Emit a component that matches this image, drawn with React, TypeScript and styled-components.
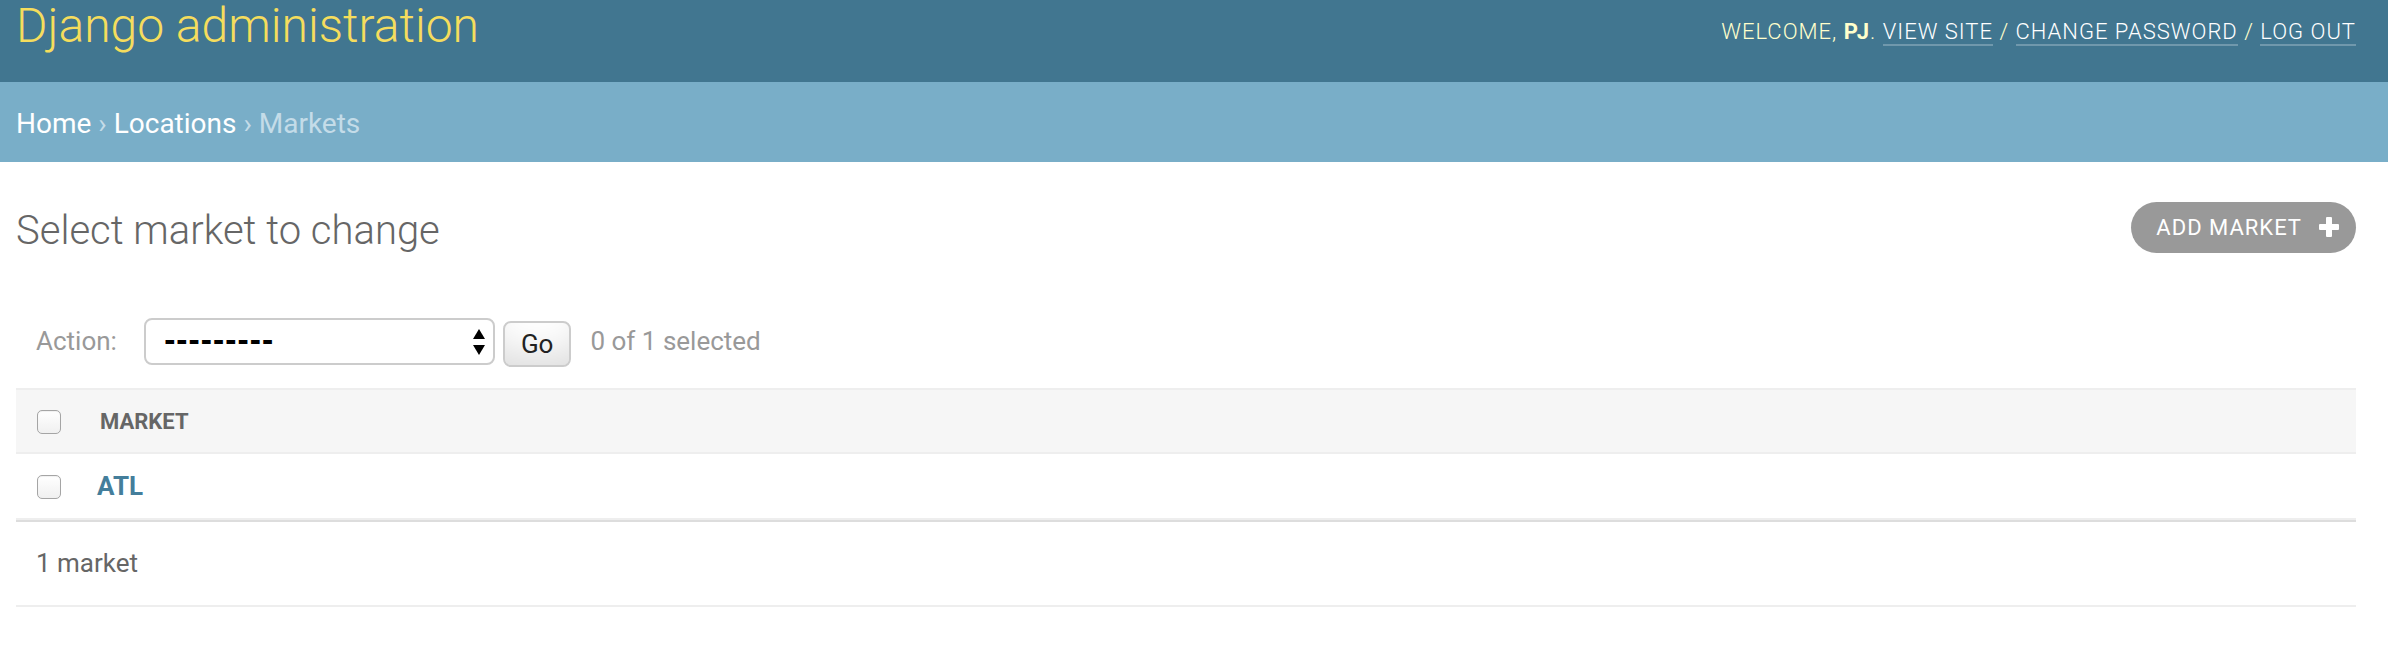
import React from 'react'
import styled, { createGlobalStyle } from 'styled-components'

const GlobalStyle = createGlobalStyle`
  body {
    margin: 0;
    background: #fff;
    color: #333;
    font-family: Roboto, 'Liberation Sans', sans-serif;
  }
  * {
    box-sizing: border-box;
  }
`

const PlusIcon: React.FC = () => (
  <svg width='20' height='20' viewBox='0 0 20 20'>
    <rect x='7' y='0' width='6' height='20' rx='1' fill='#fff' />
    <rect x='0' y='7' width='20' height='6' rx='1' fill='#fff' />
  </svg>
)

const SelectArrows: React.FC = () => (
  <svg width='12' height='26' viewBox='0 0 12 26'>
    <path d='M6 0 L12 10 L0 10 Z' fill='#000' />
    <path d='M0 16 L12 16 L6 26 Z' fill='#000' />
  </svg>
)

const App: React.FC = () => {
  return (
    <Page>
      <GlobalStyle />
      <Header>
        <Branding>Django administration</Branding>
        <UserTools>
          Welcome, <strong>PJ</strong>. <ToolLink>View site</ToolLink> / <ToolLink>Change password</ToolLink> /{' '}
          <ToolLink>Log out</ToolLink>
        </UserTools>
      </Header>
      <Breadcrumbs>
        <Crumb>Home</Crumb>&nbsp;›&nbsp;<Crumb>Locations</Crumb>&nbsp;›&nbsp;Markets
      </Breadcrumbs>
      <Content>
        <TitleRow>
          <Title>Select market to change</Title>
          <AddButton>
            Add market
            <PlusIcon />
          </AddButton>
        </TitleRow>
        <Actions>
          <ActionLabel>Action:</ActionLabel>
          <FakeSelect>
            <span>---------</span>
            <SelectArrows />
          </FakeSelect>
          <GoButton>Go</GoButton>
          <Counter>0 of 1 selected</Counter>
        </Actions>
        <Results>
          <HeadRow>
            <CheckCell>
              <Checkbox />
            </CheckCell>
            <HeadLabel>Market</HeadLabel>
          </HeadRow>
          <BodyRow>
            <CheckCell>
              <Checkbox />
            </CheckCell>
            <RowLink>ATL</RowLink>
          </BodyRow>
        </Results>
        <Paginator>1 market</Paginator>
      </Content>
    </Page>
  )
}

const Page = styled.div`
  width: 100%;
  min-height: 660px;
`

const Header = styled.header`
  display: flex;
  justify-content: space-between;
  align-items: flex-start;
  height: 82px;
  padding: 0 32px 0 16px;
  background: #417690;
`

const Branding = styled.h1`
  margin: 2px 0 0 0;
  font-size: 48px;
  line-height: 48px;
  font-weight: 300;
  color: #f5dd5d;
`

const UserTools = styled.div`
  margin-top: 21px;
  font-size: 22px;
  line-height: 22px;
  font-weight: 300;
  letter-spacing: 1px;
  text-transform: uppercase;
  color: #ffc;
  white-space: nowrap;
  strong {
    font-weight: 700;
  }
`

const ToolLink = styled.a`
  color: #fff;
  text-decoration: none;
  border-bottom: 2px solid rgba(255, 255, 255, 0.25);
`

const Breadcrumbs = styled.nav`
  display: flex;
  align-items: center;
  height: 80px;
  padding: 3px 32px 0 16px;
  background: #79aec8;
  color: #c4dce8;
  font-size: 28px;
`

const Crumb = styled.a`
  color: #fff;
  text-decoration: none;
`

const Content = styled.main`
  padding: 40px 32px 0 16px;
`

const TitleRow = styled.div`
  display: flex;
  justify-content: space-between;
  align-items: center;
  height: 51px;
  margin-bottom: 45px;
`

const Title = styled.h1`
  margin: 0;
  padding-top: 5px;
  font-size: 40px;
  font-weight: 300;
  color: #666;
`

const AddButton = styled.a`
  display: flex;
  align-items: center;
  gap: 17px;
  height: 51px;
  padding: 0 17px 0 25px;
  border-radius: 26px;
  background: #999;
  color: #fff;
  font-size: 22px;
  letter-spacing: 1px;
  text-transform: uppercase;
  svg {
    margin-top: -1px;
  }
`

const Actions = styled.div`
  display: flex;
  align-items: flex-start;
  height: 90px;
  padding: 20px 20px 0 20px;
  color: #999;
  font-size: 26px;
`

const ActionLabel = styled.label`
  line-height: 47px;
`

const FakeSelect = styled.div`
  display: flex;
  align-items: center;
  justify-content: space-between;
  width: 351px;
  height: 47px;
  margin-left: 27px;
  padding: 0 8px 0 18px;
  border: 2px solid #ccc;
  border-radius: 8px;
  background: #fff;
  color: #000;
  font-family: 'DejaVu Sans', sans-serif;
  font-size: 28px;
  font-weight: 700;
  letter-spacing: 0.6px;
  span {
    margin-top: -2px;
  }
`

const GoButton = styled.button`
  height: 46px;
  margin: 3px 0 0 8px;
  padding: 0 16px;
  border: 2px solid #ccc;
  border-radius: 8px;
  background: #fff;
  box-shadow: 0 -30px 40px -20px rgba(0, 0, 0, 0.15) inset;
  color: #222;
  font-family: Roboto, sans-serif;
  font-size: 26px;
  line-height: 1;
`

const Counter = styled.span`
  margin-left: 19px;
  line-height: 47px;
`

const Results = styled.div`
  display: flex;
  flex-direction: column;
`

const HeadRow = styled.div`
  display: grid;
  grid-template-columns: 65px 1fr;
  align-items: center;
  height: 66px;
  border-top: 2px solid #eee;
  border-bottom: 2px solid #eee;
  background: #f6f6f6;
`

const BodyRow = styled.div`
  display: grid;
  grid-template-columns: 65px 1fr;
  align-items: center;
  height: 66px;
  border-bottom: 2px solid #eee;
`

const CheckCell = styled.div`
  display: flex;
  justify-content: center;
  padding-top: 1px;
`

const Checkbox = styled.span`
  display: block;
  width: 24px;
  height: 24px;
  border: 1.5px solid #a5a5a5;
  border-radius: 5px;
  background: linear-gradient(#fff, #f0f0f0);
  box-shadow: inset 0 1px 1px rgba(0, 0, 0, 0.06);
`

const HeadLabel = styled.span`
  padding-left: 19px;
  font-size: 22px;
  font-weight: 700;
  text-transform: uppercase;
  color: #666;
`

const RowLink = styled.a`
  padding-left: 16px;
  font-size: 26px;
  font-weight: 700;
  color: #447e9b;
`

const Paginator = styled.div`
  padding: 20px 20px;
  line-height: 43px;
  border-top: 2px solid #ddd;
  border-bottom: 2px solid #eee;
  font-size: 26px;
  color: #666;
`

export default App
